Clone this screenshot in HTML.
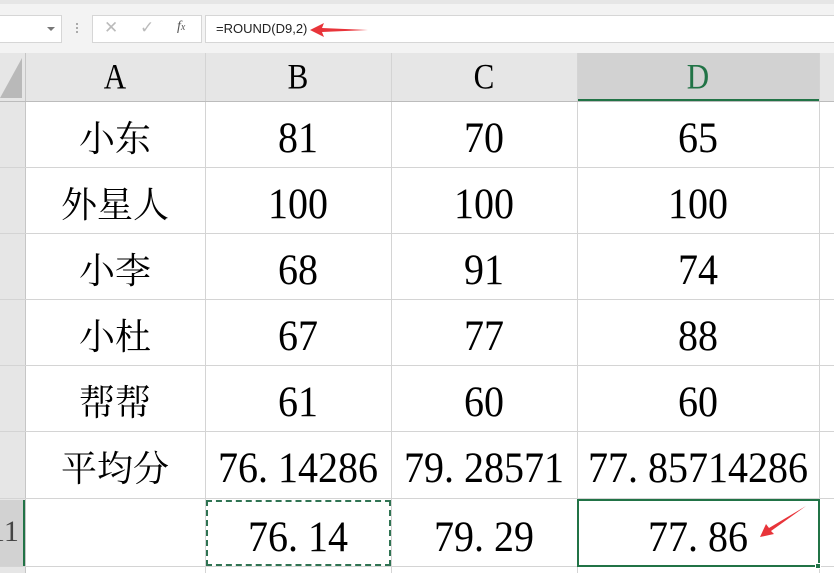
<!DOCTYPE html>
<html><head><meta charset="utf-8"><style>
*{margin:0;padding:0;box-sizing:border-box}
body{width:834px;height:573px;overflow:hidden;background:#fff;position:relative;font-family:"Liberation Serif","Noto Serif CJK SC",serif}
.abs{position:absolute}
.cell{position:absolute;display:flex;align-items:center;justify-content:center;font-size:36px;color:#000}
.n{font-size:40px}
.n span{display:inline-block;transform:scaleY(1.08)}
.h span{display:inline-block;transform:scaleY(1.15)}
.vl{position:absolute;width:1px;background:#d4d4d4}
.hl{position:absolute;height:1px;background:#d4d4d4}
</style></head><body>
<div class="abs" style="left:0;top:0;width:834px;height:53px;background:#f3f3f3"></div>
<div class="abs" style="left:0;top:0;width:834px;height:4px;background:#e6e6e6"></div>
<div class="abs" style="left:-2px;top:15px;width:64px;height:28px;background:#fff;border:1px solid #d6d6d6"></div>
<div class="abs" style="left:47px;top:27px;width:0;height:0;border-left:4px solid transparent;border-right:4px solid transparent;border-top:4px solid #777"></div>
<div class="abs" style="left:76px;top:23px;width:2px;height:2px;background:#aaa;box-shadow:0 4px #aaa,0 8px #aaa"></div>
<div class="abs" style="left:92px;top:15px;width:110px;height:28px;background:#fff;border:1px solid #d6d6d6"></div>
<div class="abs" style="left:104px;top:18px;font:17px 'Liberation Sans',sans-serif;color:#bbb">✕</div>
<div class="abs" style="left:140px;top:18px;font:17px 'Liberation Sans',sans-serif;color:#bbb">✓</div>
<div class="abs" style="left:177px;top:19px;font:italic 14px 'Liberation Serif',serif;color:#555">f<span style="font-size:10px">x</span></div>
<div class="abs" style="left:205px;top:15px;width:640px;height:28px;background:#fff;border:1px solid #d6d6d6"></div>
<div class="abs" style="left:216px;top:21px;font:13px 'Liberation Sans',sans-serif;color:#222">=ROUND(D9,2)</div>
<svg class="abs" style="left:308px;top:22px" width="62" height="16"><polygon points="2,8 16,1 14,6 60,8 14,10 16,15" fill="#e8343a"/></svg>
<div class="abs" style="left:0;top:53px;width:834px;height:48px;background:#e6e6e6"></div>
<div class="abs" style="left:577px;top:53px;width:242px;height:48px;background:#d2d2d2"></div>
<div class="abs" style="left:577px;top:99px;width:242px;height:2px;background:#217346"></div>
<div class="abs" style="left:0;top:53px;width:25px;height:520px;background:#e6e6e6"></div>
<svg class="abs" style="left:0;top:56px" width="24" height="44"><polygon points="22,2 22,42 0,42" fill="#b9b9b9"/></svg>
<div class="abs" style="left:0;top:500px;width:25px;height:66px;background:#d2d2d2;border-right:2px solid #217346"></div>
<div class="abs" style="left:-10px;top:515px;font-size:30px;color:#444">11</div>
<div class="cell h" style="left:25px;top:53px;width:180px;height:48px;font-size:31px"><span>A</span></div>
<div class="cell h" style="left:205px;top:53px;width:186px;height:48px;font-size:31px"><span>B</span></div>
<div class="cell h" style="left:391px;top:53px;width:186px;height:48px;font-size:31px"><span>C</span></div>
<div class="cell h" style="left:577px;top:53px;width:242px;height:48px;font-size:31px;color:#217346"><span>D</span></div>
<div class="vl" style="left:25px;top:53px;height:520px;background:#c6c6c6"></div>
<div class="vl" style="left:205px;top:53px;height:520px"></div>
<div class="vl" style="left:391px;top:53px;height:520px"></div>
<div class="vl" style="left:577px;top:53px;height:520px"></div>
<div class="vl" style="left:819px;top:53px;height:520px"></div>
<div class="hl" style="left:0;top:101px;width:834px;background:#bcbcbc"></div>
<div class="hl" style="left:0;top:167px;width:834px"></div>
<div class="hl" style="left:0;top:233px;width:834px"></div>
<div class="hl" style="left:0;top:299px;width:834px"></div>
<div class="hl" style="left:0;top:365px;width:834px"></div>
<div class="hl" style="left:0;top:431px;width:834px"></div>
<div class="hl" style="left:0;top:498px;width:834px"></div>
<div class="hl" style="left:0;top:566px;width:834px"></div>
<div class="cell" style="left:25px;top:103px;width:180px;height:66px">小东</div>
<div class="cell n" style="left:205px;top:104px;width:186px;height:66px"><span>81</span></div>
<div class="cell n" style="left:391px;top:104px;width:186px;height:66px"><span>70</span></div>
<div class="cell n" style="left:577px;top:104px;width:242px;height:66px"><span>65</span></div>
<div class="cell" style="left:25px;top:169px;width:180px;height:66px">外星人</div>
<div class="cell n" style="left:205px;top:170px;width:186px;height:66px"><span>100</span></div>
<div class="cell n" style="left:391px;top:170px;width:186px;height:66px"><span>100</span></div>
<div class="cell n" style="left:577px;top:170px;width:242px;height:66px"><span>100</span></div>
<div class="cell" style="left:25px;top:235px;width:180px;height:66px">小李</div>
<div class="cell n" style="left:205px;top:236px;width:186px;height:66px"><span>68</span></div>
<div class="cell n" style="left:391px;top:236px;width:186px;height:66px"><span>91</span></div>
<div class="cell n" style="left:577px;top:236px;width:242px;height:66px"><span>74</span></div>
<div class="cell" style="left:25px;top:301px;width:180px;height:66px">小杜</div>
<div class="cell n" style="left:205px;top:302px;width:186px;height:66px"><span>67</span></div>
<div class="cell n" style="left:391px;top:302px;width:186px;height:66px"><span>77</span></div>
<div class="cell n" style="left:577px;top:302px;width:242px;height:66px"><span>88</span></div>
<div class="cell" style="left:25px;top:367px;width:180px;height:66px">帮帮</div>
<div class="cell n" style="left:205px;top:368px;width:186px;height:66px"><span>61</span></div>
<div class="cell n" style="left:391px;top:368px;width:186px;height:66px"><span>60</span></div>
<div class="cell n" style="left:577px;top:368px;width:242px;height:66px"><span>60</span></div>
<div class="cell" style="left:25px;top:433px;width:180px;height:67px">平均分</div>
<div class="cell n" style="left:205px;top:434px;width:186px;height:67px"><span>76.&nbsp;14286</span></div>
<div class="cell n" style="left:391px;top:434px;width:186px;height:67px"><span>79.&nbsp;28571</span></div>
<div class="cell n" style="left:577px;top:434px;width:242px;height:67px"><span>77.&nbsp;85714286</span></div>
<div class="abs" style="left:206px;top:500px;width:185px;height:66px;border:2px dashed #2f7352"></div>
<div class="abs" style="left:577px;top:499px;width:243px;height:68px;border:2px solid #217346"></div>
<div class="abs" style="left:815px;top:563px;width:6px;height:6px;background:#217346;border:1px solid #fff"></div>
<div class="cell n" style="left:205px;top:503px;width:186px;height:66px"><span>76.&nbsp;14</span></div>
<div class="cell n" style="left:391px;top:503px;width:186px;height:66px"><span>79.&nbsp;29</span></div>
<div class="cell n" style="left:577px;top:503px;width:242px;height:66px"><span>77.&nbsp;86</span></div>
<svg class="abs" style="left:756px;top:504px" width="52" height="36"><polygon points="4,33 10,20 13,24 50,2 15,27 18,30" fill="#e8343a"/></svg>
</body></html>
